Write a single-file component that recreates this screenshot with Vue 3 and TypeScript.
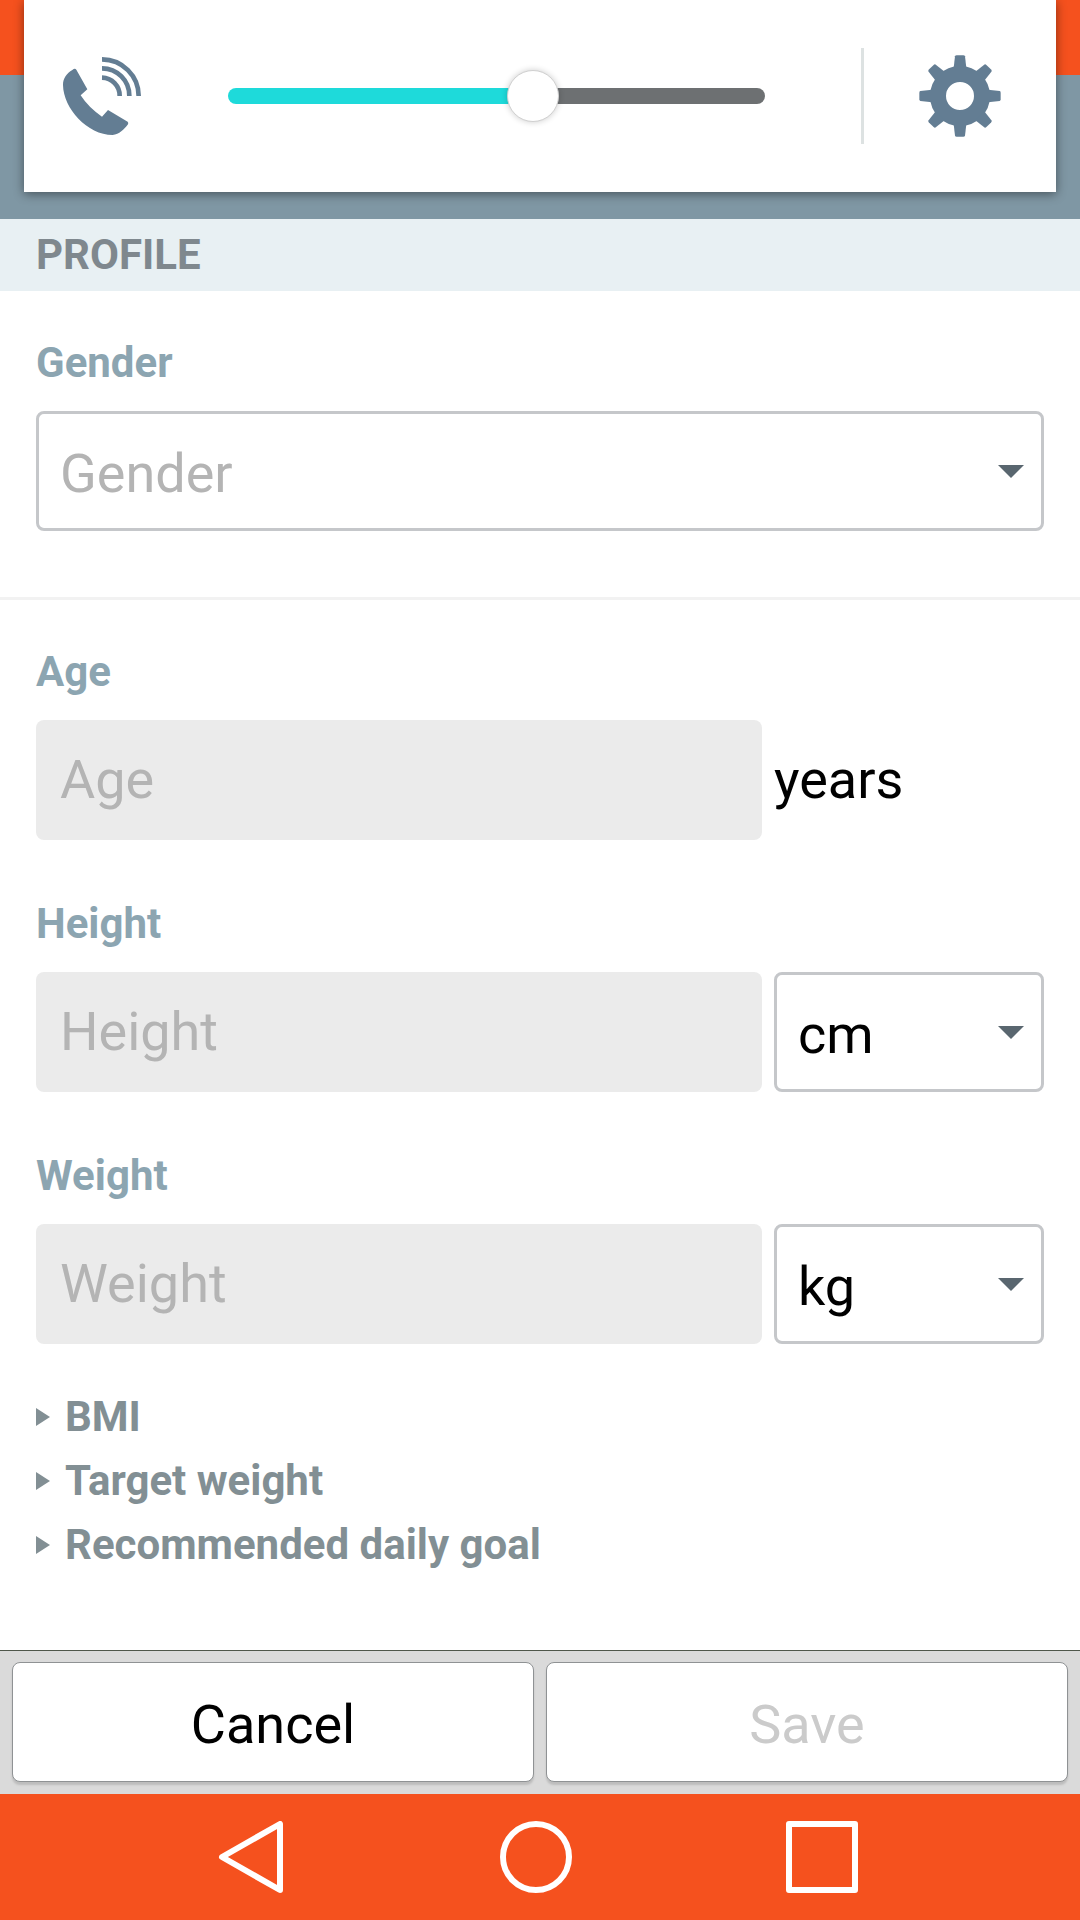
<script setup lang="ts">
import { computed, ref } from 'vue'

interface Measure {
  id: string
  label: string
  units: string[]
}

const measures: Measure[] = [
  { id: 'age', label: 'Age', units: [] },
  { id: 'height', label: 'Height', units: ['cm', 'ft'] },
  { id: 'weight', label: 'Weight', units: ['kg', 'lb'] },
]

const infoLinks: string[] = ['BMI', 'Target weight', 'Recommended daily goal']

const gender = ref('')
const values = ref<Record<string, string>>({ age: '', height: '', weight: '' })
const units = ref<Record<string, string>>({ height: 'cm', weight: 'kg' })

const volumeMax = 40
const volume = ref(23)
const volumeFill = computed(() => `${(volume.value / volumeMax) * 100}%`)

const canSave = computed(
  () => gender.value !== '' && measures.every((m) => values.value[m.id] !== ''),
)

const teeth = [0, 45, 90, 135, 180, 225, 270, 315]
</script>

<template>
  <div class="screen">
    <header class="top">
      <div class="status-bar"></div>
      <div class="app-bar"></div>
      <div class="volume">
        <svg class="phone" viewBox="189 171 234 234" aria-hidden="true">
          <path
            fill="currentColor"
            d="M217 210Q225 203 229 209L262 268L242 286Q265 322 306 350L324 330L383 365Q386 368 384 373C372 388 358 404 338 405C262 405 190 325 189 255C189 235 200 220 217 210Z"
          />
          <g fill="none" stroke="currentColor" stroke-width="14">
            <path d="M306 178A110 110 0 0 1 416 288" />
            <path d="M306 205A82 82 0 0 1 388 288" />
            <path d="M306 233A54 54 0 0 1 359 288" />
          </g>
        </svg>
        <input
          v-model.number="volume"
          class="slider"
          type="range"
          min="0"
          :max="volumeMax"
          aria-label="Call volume"
          :style="{ '--fill': volumeFill }"
        />
        <div class="volume-line"></div>
        <button class="gear" type="button" aria-label="Sound settings">
          <svg viewBox="-123 -123 246 246" aria-hidden="true">
            <circle r="66" fill="none" stroke="currentColor" stroke-width="48" />
            <path
              v-for="angle in teeth"
              :key="angle"
              fill="currentColor"
              :transform="`rotate(${angle})`"
              d="M-19 -84L-15 -119Q-14 -122 -10 -122H10Q14 -122 15 -119L19 -84Z"
            />
          </svg>
        </button>
      </div>
    </header>

    <h1 class="section-title">PROFILE</h1>

    <main class="content">
      <section class="group">
        <div class="field">
          <label class="label" for="gender">Gender</label>
          <div class="picker">
            <select id="gender" v-model="gender" :class="{ empty: gender === '' }">
              <option value="" disabled>Gender</option>
              <option value="f">Female</option>
              <option value="m">Male</option>
            </select>
            <svg class="arrow" viewBox="0 0 26 13" aria-hidden="true">
              <path fill="currentColor" d="M0 0H26L13 13Z" />
            </svg>
          </div>
        </div>
      </section>

      <section class="group measures">
        <div v-for="m in measures" :key="m.id" class="field">
          <label class="label" :for="m.id">{{ m.label }}</label>
          <div class="row">
            <input
              :id="m.id"
              v-model="values[m.id]"
              class="box"
              type="text"
              inputmode="numeric"
              :placeholder="m.label"
            />
            <div v-if="m.units.length" class="picker unit">
              <select v-model="units[m.id]" :aria-label="`${m.label} unit`">
                <option v-for="u in m.units" :key="u" :value="u">{{ u }}</option>
              </select>
              <svg class="arrow" viewBox="0 0 26 13" aria-hidden="true">
                <path fill="currentColor" d="M0 0H26L13 13Z" />
              </svg>
            </div>
            <span v-else class="unit unit-text">years</span>
          </div>
        </div>
      </section>

      <ul class="info">
        <li v-for="item in infoLinks" :key="item">
          <button type="button" class="info-link" aria-expanded="false">
            <svg class="marker" viewBox="0 0 14 18" aria-hidden="true">
              <path fill="currentColor" d="M0 0L14 9L0 18Z" />
            </svg>
            {{ item }}
          </button>
        </li>
      </ul>
    </main>

    <footer class="actions">
      <button type="button" class="action">Cancel</button>
      <button type="button" class="action" :disabled="!canSave">Save</button>
    </footer>

    <nav class="system-nav" aria-label="System">
      <button type="button" aria-label="Back">
        <svg viewBox="0 0 73 72" aria-hidden="true">
          <path d="M7 36L65 3V69Z" />
        </svg>
      </button>
      <button type="button" aria-label="Home">
        <svg viewBox="0 0 73 72" aria-hidden="true">
          <circle cx="36" cy="36" r="33" />
        </svg>
      </button>
      <button type="button" aria-label="Recent apps">
        <svg viewBox="0 0 73 72" aria-hidden="true">
          <rect x="4" y="3" width="66" height="66" />
        </svg>
      </button>
    </nav>
  </div>
</template>

<style>
body {
  margin: 0;
  background: #fff;
}
</style>

<style scoped>
.screen {
  display: flex;
  flex-direction: column;
  min-height: 100vh;
  background: #fff;
  color: #000;
  font-family: Roboto, 'Noto Sans', sans-serif;
  font-size: 54px;
}

.screen *,
.screen {
  box-sizing: border-box;
}

button,
input,
select {
  margin: 0;
  padding: 0;
  border: 0;
  background: none;
  color: inherit;
  font: inherit;
}

svg {
  display: block;
}

.top {
  position: relative;
}

.status-bar {
  height: 75px;
  background: #f5511e;
}

.app-bar {
  height: 144px;
  background: #7f97a4;
}

.volume {
  position: absolute;
  top: 0;
  left: 24px;
  right: 24px;
  display: flex;
  align-items: center;
  height: 192px;
  padding: 0 55px 0 39px;
  background: #fff;
  box-shadow: 0 2px 10px rgba(0, 0, 0, 0.45);
  color: #637d93;
}

.phone {
  flex: none;
  width: 78px;
  height: 78px;
}

.slider {
  flex: 1;
  min-width: 0;
  height: 52px;
  margin: 0 96px 0 87px;
  appearance: none;
}

.slider::-webkit-slider-runnable-track {
  height: 16px;
  border-radius: 8px;
  background: linear-gradient(to right, #1edada var(--fill), #6d7072 var(--fill));
}

.slider::-webkit-slider-thumb {
  width: 52px;
  height: 52px;
  margin-top: -18px;
  border: 1px solid #d0d0d0;
  border-radius: 50%;
  background: #fff;
  box-shadow: 0 0 6px rgba(0, 0, 0, 0.2);
  appearance: none;
}

.volume-line {
  flex: none;
  width: 3px;
  height: 96px;
  background: #dde2e2;
}

.gear {
  flex: none;
  width: 82px;
  height: 82px;
  margin-left: 55px;
}

.section-title {
  margin: 0;
  padding: 0 36px;
  background: #e8f0f3;
  color: #7f888e;
  font-size: 42px;
  font-weight: 700;
  line-height: 72px;
}

.content {
  flex: 1;
}

.group {
  padding: 48px 36px 0;
}

.group + .group {
  margin-top: 66px;
  border-top: 3px solid #f2f2f2;
}

.measures {
  display: flex;
  flex-direction: column;
  gap: 60px;
}

.field {
  display: flex;
  flex-direction: column;
  gap: 24px;
}

.label {
  color: #8ca5b1;
  font-size: 42px;
  font-weight: 700;
  line-height: 48px;
}

.row {
  display: flex;
  align-items: center;
  gap: 12px;
}

.box {
  flex: 1;
  min-width: 0;
  height: 120px;
  padding: 0 24px 2px;
  border-radius: 8px;
  background: #ebebeb;
}

.box::placeholder {
  color: #b4b4b4;
  opacity: 1;
}

.unit {
  flex: none;
  width: 270px;
}

.unit-text {
  padding-bottom: 2px;
}

.picker {
  display: grid;
  align-items: center;
}

.picker select {
  grid-area: 1 / 1;
  width: 100%;
  height: 120px;
  padding: 4px 60px 0 21px;
  border: 3px solid #c5c7ca;
  border-radius: 8px;
  background: #fff;
  appearance: none;
}

.picker select.empty {
  color: #b4b4b4;
}

.arrow {
  grid-area: 1 / 1;
  justify-self: end;
  width: 26px;
  height: 13px;
  margin-right: 20px;
  color: #59666f;
  pointer-events: none;
}

.info {
  margin: 0;
  padding: 41px 36px;
  list-style: none;
}

.info-link {
  display: flex;
  align-items: center;
  gap: 15px;
  color: #828f94;
  font-size: 42px;
  font-weight: 700;
  line-height: 64px;
}

.marker {
  width: 14px;
  height: 18px;
}

.actions {
  display: flex;
  gap: 12px;
  padding: 11px 12px 12px;
  border-top: 1px solid #4f574a;
  background: #dadada;
}

.action {
  flex: 1;
  height: 120px;
  padding-top: 4px;
  border: 1px solid #8f9294;
  border-radius: 8px;
  background: #fff;
  box-shadow: 0 3px 2px #bdbdbd;
}

.action:disabled {
  color: #cbcbcb;
}

.system-nav {
  display: flex;
  padding: 0 116px 0 109px;
  background: #f5511e;
}

.system-nav button {
  flex: 1;
  display: flex;
  justify-content: center;
  padding: 27px 0;
}

.system-nav svg {
  width: 73px;
  height: 72px;
  fill: none;
  stroke: #fff;
  stroke-width: 6px;
  stroke-linejoin: round;
}
</style>
